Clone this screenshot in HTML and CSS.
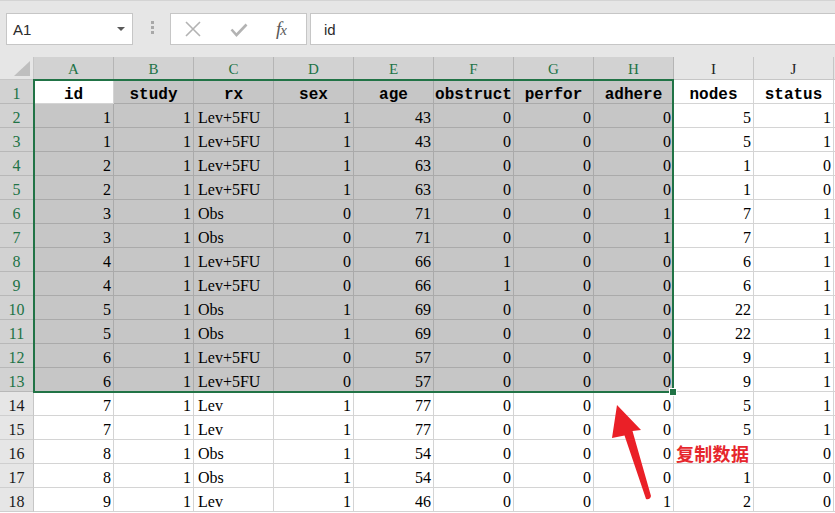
FILE: index.html
```html
<!DOCTYPE html>
<html>
<head>
<meta charset="utf-8">
<link rel="stylesheet" href="styles.css">
</head>
<body>
<div class="app">
  <div class="toolbar">
    <div class="namebox"><span class="ref">A1</span><svg class="caret" width="8" height="5" viewBox="0 0 8 5"><path d="M0 0H8L4 4Z" fill="#595959"/></svg></div>
    <div class="grip"><i></i><i></i><i></i></div>
    <div class="fbtns">
      <svg class="btn-x" width="16" height="16" viewBox="0 0 16 16"><path d="M1 1L15 15M15 1L1 15" stroke="#b3b3b3" stroke-width="1.6" fill="none"/></svg>
      <svg class="btn-ok" width="18" height="14" viewBox="0 0 18 14"><path d="M1.5 6.5L6.5 12L16.5 1.5" stroke="#b3b3b3" stroke-width="2.6" fill="none"/></svg>
      <span class="fx">f<span class="x">x</span></span>
    </div>
    <div class="finput">id</div>
  </div>

  <div class="grid">
    <div class="corner"><span class="tri"></span></div>
    <div class="ch sel">A</div><div class="ch sel">B</div><div class="ch sel">C</div><div class="ch sel">D</div><div class="ch sel">E</div><div class="ch sel">F</div><div class="ch sel">G</div><div class="ch sel">H</div><div class="ch">I</div><div class="ch">J</div><div class="ch edge"></div>

    <div class="rh sel">1</div>
    <div class="c b act">id</div><div class="c s b">study</div><div class="c s b">rx</div><div class="c s b">sex</div><div class="c s b">age</div><div class="c s b">obstruct</div><div class="c s b">perfor</div><div class="c s b">adhere</div><div class="c b">nodes</div><div class="c b">status</div><div class="c e"></div>

    <div class="rh sel">2</div>
    <div class="c s r">1</div><div class="c s r">1</div><div class="c s">Lev+5FU</div><div class="c s r">1</div><div class="c s r">43</div><div class="c s r">0</div><div class="c s r">0</div><div class="c s r">0</div><div class="c r">5</div><div class="c r">1</div><div class="c e"></div>

    <div class="rh sel">3</div>
    <div class="c s r">1</div><div class="c s r">1</div><div class="c s">Lev+5FU</div><div class="c s r">1</div><div class="c s r">43</div><div class="c s r">0</div><div class="c s r">0</div><div class="c s r">0</div><div class="c r">5</div><div class="c r">1</div><div class="c e"></div>

    <div class="rh sel">4</div>
    <div class="c s r">2</div><div class="c s r">1</div><div class="c s">Lev+5FU</div><div class="c s r">1</div><div class="c s r">63</div><div class="c s r">0</div><div class="c s r">0</div><div class="c s r">0</div><div class="c r">1</div><div class="c r">0</div><div class="c e"></div>

    <div class="rh sel">5</div>
    <div class="c s r">2</div><div class="c s r">1</div><div class="c s">Lev+5FU</div><div class="c s r">1</div><div class="c s r">63</div><div class="c s r">0</div><div class="c s r">0</div><div class="c s r">0</div><div class="c r">1</div><div class="c r">0</div><div class="c e"></div>

    <div class="rh sel">6</div>
    <div class="c s r">3</div><div class="c s r">1</div><div class="c s">Obs</div><div class="c s r">0</div><div class="c s r">71</div><div class="c s r">0</div><div class="c s r">0</div><div class="c s r">1</div><div class="c r">7</div><div class="c r">1</div><div class="c e"></div>

    <div class="rh sel">7</div>
    <div class="c s r">3</div><div class="c s r">1</div><div class="c s">Obs</div><div class="c s r">0</div><div class="c s r">71</div><div class="c s r">0</div><div class="c s r">0</div><div class="c s r">1</div><div class="c r">7</div><div class="c r">1</div><div class="c e"></div>

    <div class="rh sel">8</div>
    <div class="c s r">4</div><div class="c s r">1</div><div class="c s">Lev+5FU</div><div class="c s r">0</div><div class="c s r">66</div><div class="c s r">1</div><div class="c s r">0</div><div class="c s r">0</div><div class="c r">6</div><div class="c r">1</div><div class="c e"></div>

    <div class="rh sel">9</div>
    <div class="c s r">4</div><div class="c s r">1</div><div class="c s">Lev+5FU</div><div class="c s r">0</div><div class="c s r">66</div><div class="c s r">1</div><div class="c s r">0</div><div class="c s r">0</div><div class="c r">6</div><div class="c r">1</div><div class="c e"></div>

    <div class="rh sel">10</div>
    <div class="c s r">5</div><div class="c s r">1</div><div class="c s">Obs</div><div class="c s r">1</div><div class="c s r">69</div><div class="c s r">0</div><div class="c s r">0</div><div class="c s r">0</div><div class="c r">22</div><div class="c r">1</div><div class="c e"></div>

    <div class="rh sel">11</div>
    <div class="c s r">5</div><div class="c s r">1</div><div class="c s">Obs</div><div class="c s r">1</div><div class="c s r">69</div><div class="c s r">0</div><div class="c s r">0</div><div class="c s r">0</div><div class="c r">22</div><div class="c r">1</div><div class="c e"></div>

    <div class="rh sel">12</div>
    <div class="c s r">6</div><div class="c s r">1</div><div class="c s">Lev+5FU</div><div class="c s r">0</div><div class="c s r">57</div><div class="c s r">0</div><div class="c s r">0</div><div class="c s r">0</div><div class="c r">9</div><div class="c r">1</div><div class="c e"></div>

    <div class="rh sel">13</div>
    <div class="c s r">6</div><div class="c s r">1</div><div class="c s">Lev+5FU</div><div class="c s r">0</div><div class="c s r">57</div><div class="c s r">0</div><div class="c s r">0</div><div class="c s r">0</div><div class="c r">9</div><div class="c r">1</div><div class="c e"></div>

    <div class="rh">14</div>
    <div class="c r">7</div><div class="c r">1</div><div class="c">Lev</div><div class="c r">1</div><div class="c r">77</div><div class="c r">0</div><div class="c r">0</div><div class="c r">0</div><div class="c r">5</div><div class="c r">1</div><div class="c e"></div>

    <div class="rh">15</div>
    <div class="c r">7</div><div class="c r">1</div><div class="c">Lev</div><div class="c r">1</div><div class="c r">77</div><div class="c r">0</div><div class="c r">0</div><div class="c r">0</div><div class="c r">5</div><div class="c r">1</div><div class="c e"></div>

    <div class="rh">16</div>
    <div class="c r">8</div><div class="c r">1</div><div class="c">Obs</div><div class="c r">1</div><div class="c r">54</div><div class="c r">0</div><div class="c r">0</div><div class="c r">0</div><div class="c r"></div><div class="c r">0</div><div class="c e"></div>

    <div class="rh">17</div>
    <div class="c r">8</div><div class="c r">1</div><div class="c">Obs</div><div class="c r">1</div><div class="c r">54</div><div class="c r">0</div><div class="c r">0</div><div class="c r">0</div><div class="c r">1</div><div class="c r">0</div><div class="c e"></div>

    <div class="rh">18</div>
    <div class="c r">9</div><div class="c r">1</div><div class="c">Lev</div><div class="c r">1</div><div class="c r">46</div><div class="c r">0</div><div class="c r">0</div><div class="c r">1</div><div class="c r">2</div><div class="c r">0</div><div class="c e"></div>
  </div>

  <div class="selection"><span class="handle"></span></div>

  <svg class="arrow" width="835" height="513" viewBox="0 0 835 513">
    <path d="M617 405 L641 430 L632.5 431 L651 496 Q650 500 646 499 L624.5 435.5 L612 438 Z" fill="#ea2027"/>
  </svg>
  <div class="note">复制数据</div>
</div>
</body>
</html>
```

FILE: styles.css
```css
html, body {
  margin: 0;
  padding: 0;
  background: #ffffff;
}

.app {
  position: relative;
  width: 835px;
  height: 513px;
  overflow: hidden;
  font-family: "Liberation Serif", "Times New Roman", serif;
}

/* ---------- toolbar ---------- */
.toolbar {
  box-sizing: border-box;
  height: 57px;
  background: #e6e6e6;
  border-top: 1px solid #d4d4d4;
  padding-top: 12px;
  display: flex;
  align-items: flex-start;
}

.namebox {
  box-sizing: border-box;
  margin-left: 6px;
  width: 127px;
  height: 32px;
  background: #ffffff;
  border: 1px solid #c6c6c6;
  display: flex;
  align-items: center;
  justify-content: space-between;
  padding: 0 7px 0 6px;
}

.ref {
  font-family: "Liberation Sans", Arial, sans-serif;
  font-size: 15px;
  color: #2b2b2b;
}

.caret {
  display: block;
}

.grip {
  margin-left: 18px;
  margin-top: 8px;
  display: flex;
  flex-direction: column;
  gap: 2px;
}

.grip i {
  display: block;
  width: 3px;
  height: 3px;
  background: #a8a8a8;
}

.fbtns {
  box-sizing: border-box;
  margin-left: 16px;
  width: 137px;
  height: 32px;
  background: #ffffff;
  border: 1px solid #c6c6c6;
  display: flex;
  align-items: center;
  padding-left: 14px;
}

.btn-x {
  display: block;
}

.btn-ok {
  display: block;
  margin-left: 29px;
  margin-top: 2px;
}

.fx {
  margin-left: 28px;
  font-family: "Liberation Serif", serif;
  font-style: italic;
  font-size: 19px;
  color: #595959;
  letter-spacing: -1px;
}

.fx .x {
  font-size: 15px;
}

.finput {
  box-sizing: border-box;
  margin-left: 3px;
  margin-right: -2px;
  flex: 1;
  height: 32px;
  background: #ffffff;
  border: 1px solid #c6c6c6;
  padding-left: 13px;
  display: flex;
  align-items: center;
  font-family: "Liberation Sans", Arial, sans-serif;
  font-size: 15px;
  color: #2b2b2b;
}

/* ---------- grid ---------- */
.grid {
  display: grid;
  grid-template-columns: 34px repeat(10, 80px) 1px;
  grid-template-rows: 23px repeat(18, 24px);
}

.grid > div {
  box-sizing: border-box;
  border-right: 1px solid #d4d4d4;
  border-bottom: 1px solid #d4d4d4;
  overflow: hidden;
  white-space: nowrap;
}

.corner {
  position: relative;
  background: #e6e6e6;
  border-right-color: #c6c6c6 !important;
  border-bottom-color: #c6c6c6 !important;
}

.tri {
  position: absolute;
  right: 3px;
  bottom: 3px;
  width: 0;
  height: 0;
  border-left: 16px solid transparent;
  border-bottom: 15px solid #bfbfbf;
}

.ch {
  background: #e6e6e6;
  border-right-color: #c6c6c6 !important;
  border-bottom-color: #c6c6c6 !important;
  display: flex;
  align-items: center;
  justify-content: center;
  font-size: 15px;
  color: #222222;
  padding-top: 2px;
}

.ch.sel {
  background: #d2d2d2;
  color: #217346;
  border-right-color: #b5b5b5 !important;
  border-bottom-color: #9f9f9f !important;
}

.ch.edge {
  border-right: none !important;
}

.rh {
  background: #e6e6e6;
  border-right-color: #c6c6c6 !important;
  border-bottom-color: #cfcfcf !important;
  display: flex;
  align-items: center;
  justify-content: center;
  font-size: 16px;
  color: #1a1a1a;
  padding-top: 5px;
}

.rh.sel {
  background: #d2d2d2;
  color: #217346;
  border-bottom-color: #b8b8b8 !important;
}

.c {
  background: #ffffff;
  font-size: 16px;
  color: #000000;
  display: flex;
  align-items: center;
  padding: 5px 3px 0 4px;
}

.c.r {
  justify-content: flex-end;
  padding-right: 2px;
}

.c.b {
  justify-content: center;
  font-family: "Liberation Mono", "Courier New", monospace;
  font-weight: bold;
  font-size: 16px;
  padding: 6px 0 0 0;
}

.c.s {
  background: #c6c6c6;
  border-right-color: #aaaaaa;
  border-bottom-color: #aaaaaa;
}

.c.act {
  background: #ffffff;
}

.c.e {
  border-right: none;
  padding: 0;
}

/* ---------- overlays ---------- */
.selection {
  position: absolute;
  left: 33px;
  top: 79px;
  width: 641px;
  height: 314px;
  box-sizing: border-box;
  border: 2px solid #217346;
  pointer-events: none;
}

.handle {
  position: absolute;
  right: -5px;
  bottom: -5px;
  width: 6px;
  height: 6px;
  background: #217346;
  border: 1px solid #ffffff;
}

.arrow {
  position: absolute;
  left: 0;
  top: 0;
  pointer-events: none;
}

.note {
  position: absolute;
  left: 676px;
  top: 441px;
  font-family: "Noto Sans CJK SC", "Noto Sans", sans-serif;
  font-weight: bold;
  font-size: 18px;
  line-height: 24px;
  color: #e6262c;
  letter-spacing: 0.3px;
}
```
